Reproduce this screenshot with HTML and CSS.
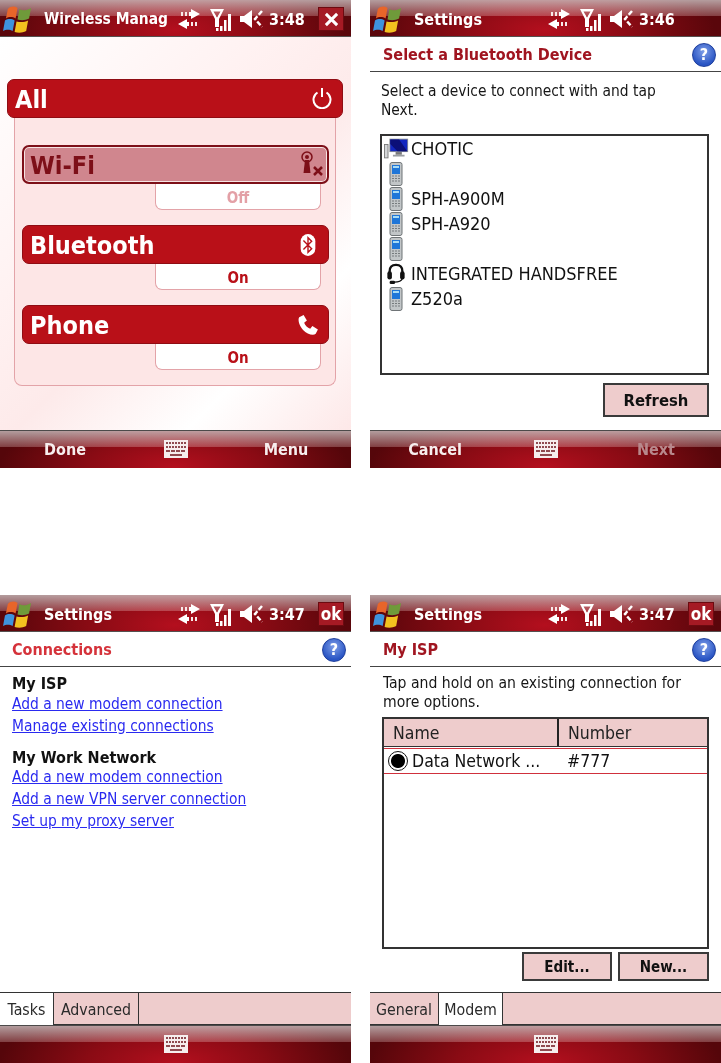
FILE: index.html
```html
<!DOCTYPE html>
<html lang="en">
<head>
<meta charset="utf-8">
<title>Windows Mobile screens</title>
<link rel="stylesheet" href="styles.css">
</head>
<body>
<svg class="defs" width="0" height="0" aria-hidden="true">
  <defs>
    <symbol id="flag" viewBox="0 0 30 28">
      <path d="M5 3C8 0 12 0 15 2L13 13C10 11 6 11 3 13Z" fill="#e8652a"/>
      <path d="M17 3C20 5 24 5 29 2L27 13C23 15 19 15 15 14Z" fill="#6f9a3a"/>
      <path d="M2 15C5 13 9 13 12 15L10 26C7 24 3 24 0 26Z" fill="#3f93dd"/>
      <path d="M14 16C18 17 22 17 26 15L24 26C20 28 16 28 12 27Z" fill="#f3c21f"/>
    </symbol>
    <symbol id="sync" viewBox="0 0 22 20">
      <path d="M13 0L22 5L13 10V7H11V3H13ZM9 10V13H11V17H9V20L0 15Z" fill="#fff"/>
      <path d="M3 3H5V7H3ZM7 3H9V7H7ZM13 13H15V17H13ZM17 13H19V17H17Z" fill="#f8eaea"/>
    </symbol>
    <symbol id="signal" viewBox="0 0 22 23">
      <path d="M0 1H14L9 11V19H5V11ZM3.500 3.500L7 9.500L10.500 3.500Z" fill="#fff"/>
      <path d="M6 20H8.500V23H6ZM10 18H12.500V23H10ZM14 12H16.500V23H14ZM18 6H21V23H18Z" fill="#fff"/>
    </symbol>
    <symbol id="speaker" viewBox="0 0 23 20">
      <path d="M0 7H4L12 1V19L4 13H0Z" fill="#fff"/>
      <path d="M22 2L15 10L22 18" fill="none" stroke="#fff" stroke-width="2.500" stroke-dasharray="5 2"/>
    </symbol>
    <symbol id="keyboard" viewBox="0 0 24 18">
      <rect width="24" height="18" fill="#f6eeee"/>
      <path d="M2 3H22M2 7H22" stroke="#8f4a50" stroke-width="2" stroke-dasharray="2 1"/>
      <path d="M2 11H22" stroke="#8f4a50" stroke-width="2" stroke-dasharray="4 1"/>
      <path d="M6 15H18" stroke="#8f4a50" stroke-width="2"/>
    </symbol>
    <symbol id="phone-dev" viewBox="0 0 14 24">
      <rect x="1" y="0.500" width="12" height="23" rx="2" fill="#c2c6c8" stroke="#6f7477"/>
      <rect x="3" y="3" width="8" height="9" fill="#1f76d8"/>
      <rect x="4" y="4" width="6" height="2" fill="#a8dcf5"/>
      <path d="M3 14H11M3 16.500H11M3 19H11" stroke="#767b7e" stroke-dasharray="2 1"/>
    </symbol>
    <symbol id="computer" viewBox="0 0 28 22">
      <rect x="0.500" y="6.500" width="4" height="15" fill="#d4d6d8" stroke="#777"/>
      <rect x="6" y="0" width="21" height="15" fill="#8a8f95"/>
      <path d="M7 1H26V14H7Z" fill="#1226c0"/>
      <path d="M7 1H17L26 14H15L7 6Z" fill="#0b0f78"/>
      <rect x="13" y="15" width="7" height="3" fill="#777"/>
      <rect x="10" y="18" width="13" height="2" fill="#9a9ea2"/>
    </symbol>
    <symbol id="headset" viewBox="0 0 22 24">
      <path d="M4 14V9C4 4 7 2 11 2S18 4 18 9V14" fill="none" stroke="#111" stroke-width="2.500"/>
      <rect x="1.500" y="9" width="5" height="9" rx="2.500" fill="#111"/>
      <rect x="15.500" y="9" width="5" height="9" rx="2.500" fill="#111"/>
      <path d="M18 17C17 20 14 21 9 21" fill="none" stroke="#111" stroke-width="1.500"/>
      <rect x="4" y="19.500" width="6" height="3.500" rx="1.500" fill="#111"/>
    </symbol>
  </defs>
</svg>

<main class="sheet">

  <section class="screen">
    <header class="titlebar">
      <svg class="flag"><use href="#flag"/></svg>
      <span class="app-name app-name-long">Wireless Manag</span>
      <svg class="st-sync"><use href="#sync"/></svg>
      <svg class="st-signal"><use href="#signal"/></svg>
      <svg class="st-speaker"><use href="#speaker"/></svg>
      <span class="clock">3:48</span>
      <span class="corner-btn">
        <svg class="close-x" viewBox="0 0 16 16"><path d="M2 2L14 14M14 2L2 14" stroke="#fff" stroke-width="3.200"/></svg>
      </span>
    </header>
    <div class="wireless">
      <div class="wl-all">
        <span>All</span>
        <svg class="wl-icon wl-icon-power" viewBox="0 0 22 22"><path d="M6.500 5.500A8.500 8.500 0 1 0 15.500 5.500" fill="none" stroke="#fff" stroke-width="2"/><path d="M11 1V10" stroke="#fff" stroke-width="2"/></svg>
      </div>
      <div class="wl-panel">
        <div class="wl-bar wl-bar-off">
          <span>Wi-Fi</span>
          <svg class="wl-icon wl-icon-wifi" viewBox="0 0 26 26"><circle cx="9" cy="6" r="5" fill="none" stroke="#7d0f18" stroke-width="1.500"/><circle cx="9" cy="6" r="2" fill="#7d0f18"/><path d="M7 9H11L12.500 22H5.500Z" fill="#7d0f18"/><path d="M16 16L24 24M24 16L16 24" stroke="#7d0f18" stroke-width="2.500"/></svg>
        </div>
        <div class="wl-state wl-state-off">Off</div>
        <div class="wl-bar">
          <span>Bluetooth</span>
          <svg class="wl-icon" viewBox="0 0 20 24"><rect x="2" y="0" width="16" height="24" rx="8" fill="#fff"/><path d="M5 7L14 16L10 20V4L14 8L5 17" fill="none" stroke="#b91018" stroke-width="1.500"/></svg>
        </div>
        <div class="wl-state">On</div>
        <div class="wl-bar">
          <span>Phone</span>
          <svg class="wl-icon" viewBox="0 0 20 20"><path d="M2 3L6 1L9 6L6.500 8C7.500 10.500 9.500 12.500 12 13.500L14 11L19 14L17 18C15 20 9 18.500 5.500 14.500C2 11 0.500 5 2 3Z" fill="#fff"/></svg>
        </div>
        <div class="wl-state">On</div>
      </div>
    </div>
    <footer class="softbar">
      <span class="soft">Done</span>
      <svg class="kbd"><use href="#keyboard"/></svg>
      <span class="soft">Menu</span>
    </footer>
  </section>

  <section class="screen">
    <header class="titlebar">
      <svg class="flag"><use href="#flag"/></svg>
      <span class="app-name">Settings</span>
      <svg class="st-sync"><use href="#sync"/></svg>
      <svg class="st-signal"><use href="#signal"/></svg>
      <svg class="st-speaker"><use href="#speaker"/></svg>
      <span class="clock">3:46</span>
      <span class="corner-btn corner-empty"></span>
    </header>
    <div class="pagehead">
      <span class="pagehead-title">Select a Bluetooth Device</span>
      <span class="help">?</span>
    </div>
    <div class="page">
      <p class="intro">Select a device to connect with and tap Next.</p>
      <ul class="devices">
        <li class="device"><svg class="dev-computer"><use href="#computer"/></svg><span>CHOTIC</span></li>
        <li class="device"><svg class="dev-phone"><use href="#phone-dev"/></svg></li>
        <li class="device"><svg class="dev-phone"><use href="#phone-dev"/></svg><span>SPH-A900M</span></li>
        <li class="device"><svg class="dev-phone"><use href="#phone-dev"/></svg><span>SPH-A920</span></li>
        <li class="device"><svg class="dev-phone"><use href="#phone-dev"/></svg></li>
        <li class="device"><svg class="dev-phone"><use href="#headset"/></svg><span>INTEGRATED HANDSFREE</span></li>
        <li class="device"><svg class="dev-phone"><use href="#phone-dev"/></svg><span>Z520a</span></li>
      </ul>
      <div class="actions actions-refresh"><span class="btn btn-refresh">Refresh</span></div>
    </div>
    <footer class="softbar">
      <span class="soft">Cancel</span>
      <svg class="kbd"><use href="#keyboard"/></svg>
      <span class="soft soft-off">Next</span>
    </footer>
  </section>

  <section class="screen">
    <header class="titlebar">
      <svg class="flag"><use href="#flag"/></svg>
      <span class="app-name">Settings</span>
      <svg class="st-sync"><use href="#sync"/></svg>
      <svg class="st-signal"><use href="#signal"/></svg>
      <svg class="st-speaker"><use href="#speaker"/></svg>
      <span class="clock">3:47</span>
      <span class="corner-btn">ok</span>
    </header>
    <div class="pagehead">
      <span class="pagehead-title pagehead-bright">Connections</span>
      <span class="help">?</span>
    </div>
    <div class="page page-links">
      <h2 class="group">My ISP</h2>
      <a class="task" href="#">Add a new modem connection</a>
      <a class="task" href="#">Manage existing connections</a>
      <h2 class="group group-next">My Work Network</h2>
      <a class="task" href="#">Add a new modem connection</a>
      <a class="task" href="#">Add a new VPN server connection</a>
      <a class="task" href="#">Set up my proxy server</a>
    </div>
    <nav class="tabs">
      <span class="tab tab-on tab-tasks">Tasks</span>
      <span class="tab tab-advanced">Advanced</span>
    </nav>
    <footer class="softbar softbar-center">
      <svg class="kbd"><use href="#keyboard"/></svg>
    </footer>
  </section>

  <section class="screen">
    <header class="titlebar">
      <svg class="flag"><use href="#flag"/></svg>
      <span class="app-name">Settings</span>
      <svg class="st-sync"><use href="#sync"/></svg>
      <svg class="st-signal"><use href="#signal"/></svg>
      <svg class="st-speaker"><use href="#speaker"/></svg>
      <span class="clock">3:47</span>
      <span class="corner-btn">ok</span>
    </header>
    <div class="pagehead">
      <span class="pagehead-title">My ISP</span>
      <span class="help">?</span>
    </div>
    <div class="page page-isp">
      <p class="intro intro-isp">Tap and hold on an existing connection for more options.</p>
      <div class="table">
        <div class="thead">
          <span class="th th-name">Name</span>
          <span class="th">Number</span>
        </div>
        <div class="row">
          <span class="radio"></span>
          <span class="cell-name">Data Network ...</span>
          <span class="cell-number">#777</span>
        </div>
      </div>
      <div class="actions actions-isp">
        <span class="btn btn-edit">Edit...</span>
        <span class="btn btn-new">New...</span>
      </div>
    </div>
    <nav class="tabs">
      <span class="tab tab-general">General</span>
      <span class="tab tab-on tab-modem">Modem</span>
    </nav>
    <footer class="softbar softbar-center">
      <svg class="kbd"><use href="#keyboard"/></svg>
    </footer>
  </section>

</main>
</body>
</html>
```

FILE: styles.css
```css
* { box-sizing: border-box; }

html, body { margin: 0; padding: 0; background: #fff; }

body {
  font-family: "DejaVu Sans Condensed", "DejaVu Sans", sans-serif;
  font-size: 14px;
  color: #111;
}

.defs { display: block; height: 0; }

.sheet {
  display: grid;
  grid-template-columns: 351px 351px;
  grid-template-rows: 468px 468px;
  column-gap: 19px;
  row-gap: 127px;
  width: 721px;
  height: 1063px;
}

.screen {
  display: flex;
  flex-direction: column;
  height: 468px;
  overflow: hidden;
  background: #fff;
  filter: blur(0.4px);
}

/* Title bar */
.titlebar {
  flex: 0 0 37px;
  display: flex;
  align-items: center;
  height: 37px;
  padding-top: 2px;
  color: #fff;
  border-bottom: 1px solid #55504f;
  background:
    linear-gradient(180deg, rgba(215,215,215,.72) 0, rgba(255,225,225,.26) 16px, transparent 16px),
    radial-gradient(ellipse 170px 60px at 175px 30px, #b40f1e 0, #8a0b14 50%, #5a060b 100%);
}

.flag { width: 29px; height: 27px; margin: 0 0 0 3px; flex: none; }

.app-name {
  width: 125px;
  margin-left: 12px;
  flex: none;
  white-space: nowrap;
  font-size: 16px;
  font-weight: 700;
}

.app-name-long { font-size: 15.400px; }

.st-sync { width: 22px; height: 20px; margin-left: 9px; flex: none; }
.st-signal { width: 22px; height: 23px; margin-left: 10px; flex: none; }
.st-speaker { width: 23px; height: 20px; margin-left: 8px; flex: none; }

.clock { width: 39px; margin-left: 6px; font-size: 16px; font-weight: 700; flex: none; }

.corner-btn {
  display: flex;
  align-items: center;
  justify-content: center;
  width: 26px;
  height: 24px;
  margin-left: 10px;
  flex: none;
  background: #a51a24;
  border: 1px solid #6c0a10;
  font-size: 17px;
  font-weight: 700;
}

.corner-empty { visibility: hidden; }

.close-x { width: 15px; height: 15px; }

/* Soft key bar */
.softbar {
  flex: 0 0 38px;
  display: grid;
  grid-template-columns: 130px 91px 130px;
  align-items: center;
  justify-items: center;
  height: 38px;
  margin-top: auto;
  color: #f7eeee;
  border-top: 1px solid #4c4a4a;
  background:
    linear-gradient(180deg, rgba(215,215,215,.72) 0, rgba(255,225,225,.26) 16px, transparent 16px),
    radial-gradient(ellipse 175px 60px at 175px 36px, #b40f1e 0, #8a0b14 50%, #55060a 100%);
}

.softbar-center .kbd { grid-column: 2; }

.soft { font-size: 16px; font-weight: 700; }
.soft-off { color: #b8888c; }

.kbd { width: 24px; height: 18px; margin-top: -1px; }

/* Wireless manager */
.wireless {
  flex: 1;
  padding: 42px 8px 0 7px;
  background: linear-gradient(135deg, #fff 0, #fff2f2 35%, #fdeaea 55%, #fff 78%, #fde8e8 100%);
}

.wl-all,
.wl-bar {
  display: flex;
  align-items: center;
  justify-content: space-between;
  height: 39px;
  padding: 1px 9px 0 7px;
  border: 1px solid #8f0c13;
  border-radius: 7px;
  background: #b91018;
  color: #fff;
  font-size: 25px;
  font-weight: 700;
}

.wl-icon { width: 22px; height: 22px; }
.wl-icon-power { margin-top: -3px; }
.wl-icon-wifi { width: 26px; height: 26px; margin-right: -6px; margin-top: -2px; }

.wl-panel {
  display: flex;
  flex-direction: column;
  width: 322px;
  height: 268px;
  margin-left: 7px;
  padding: 27px 7px 0;
  background: #fde6e6;
  border: 1px solid #e3a3a8;
  border-top: 0;
  border-radius: 0 0 8px 8px;
}

.wl-bar { width: 307px; }

.wl-bar-off {
  padding-left: 6px;
  color: #7d0f18;
  background: #d0868e;
  border: 2px solid #7d0f18;
  box-shadow: inset 0 0 0 1px #f6e4e4;
}

.wl-state {
  display: flex;
  align-items: center;
  justify-content: center;
  align-self: flex-end;
  width: 166px;
  height: 26px;
  margin: 0 7px 15px 0;
  padding-top: 2px;
  background: #fff;
  border: 1px solid #e3a3a8;
  border-top: 0;
  border-radius: 0 0 7px 7px;
  color: #b91018;
  font-size: 15px;
  font-weight: 700;
}

.wl-state-off { color: #e3a0a6; }

/* Page heading */
.pagehead {
  flex: 0 0 35px;
  display: flex;
  align-items: center;
  justify-content: space-between;
  padding: 1px 5px 0 13px;
  background: #fff;
  border-bottom: 1px solid #444;
}

.pagehead-title { font-size: 16px; font-weight: 700; color: #a01520; }
.pagehead-bright { margin-left: -1px; color: #d5323a; }

.help {
  display: flex;
  align-items: center;
  justify-content: center;
  width: 24px;
  height: 24px;
  border-radius: 50%;
  border: 1px solid #1f3f9c;
  background: radial-gradient(circle at 50% 35%, #7f9fe8, #2a55c4 70%);
  color: #fff;
  font-size: 16px;
  font-weight: 700;
}

.page { flex: 1; background: #fff; }

.intro {
  margin: 0;
  padding: 10px 60px 0 11px;
  font-size: 15.400px;
  line-height: 19px;
  color: #161616;
}

.devices {
  list-style: none;
  width: 329px;
  height: 241px;
  margin: 14px 0 0 10px;
  padding: 0 0 0 2px;
  border: 2px solid #333;
}

.device {
  display: flex;
  align-items: center;
  height: 25px;
  font-size: 18px;
}

.dev-computer { width: 25px; height: 21px; margin-right: 2px; flex: none; }
.dev-phone { width: 20px; height: 24px; margin: 0 5px 0 2px; flex: none; }

.actions { display: flex; justify-content: flex-end; padding-right: 12px; }
.actions-refresh { margin-top: 8px; }
.actions-isp { gap: 6px; margin-top: 3px; }

.btn {
  display: flex;
  align-items: center;
  justify-content: center;
  background: #eecccc;
  border: 2px solid #3a3a3a;
  font-weight: 700;
  font-size: 15px;
}

.btn-refresh { width: 106px; height: 34px; font-size: 16.500px; }
.btn-edit { width: 90px; height: 29px; }
.btn-new { width: 91px; height: 29px; }

/* Links */
.page-links { display: flex; flex-direction: column; align-items: flex-start; padding: 7px 0 0 12px; }

.group { margin: 0; height: 20px; font-size: 16px; line-height: 20px; font-weight: 700; color: #111; }
.group-next { height: 19px; margin-top: 11px; }

.task {
  font-size: 15.400px;
  line-height: 22px;
  height: 22px;
  color: #2a2af0;
  text-decoration: underline;
}

.group + .task { height: 20px; line-height: 20px; }
.group + .task + .task { margin-top: 1px; }

/* Tabs */
.tabs {
  flex: 0 0 33px;
  display: flex;
  height: 33px;
  background: #eecccc;
  border-top: 1px solid #333;
  border-bottom: 1px solid #333;
}

.tab {
  display: flex;
  align-items: center;
  justify-content: center;
  margin-top: -1px;
  padding-top: 1px;
  border-right: 1px solid #333;
  border-top: 1px solid #333;
  font-size: 15.800px;
  color: #2a2a2a;
}

.tab-on { background: #fff; margin-bottom: -1px; }
.tab-tasks { width: 54px; }
.tab-advanced { width: 85px; }
.tab-general { width: 69px; }
.tab-modem { width: 64px; }

/* ISP table */
.page-isp { padding: 0; }
.intro-isp { padding: 7px 20px 0 13px; font-size: 15.600px; }

.table {
  width: 327px;
  height: 232px;
  margin: 5px 0 0 12px;
  border: 2px solid #333;
}

.thead {
  display: grid;
  grid-template-columns: 175px 1fr;
  height: 28px;
  background: #eecccc;
  border-bottom: 1px solid #333;
}

.th {
  display: flex;
  align-items: center;
  padding-left: 9px;
  font-size: 17.500px;
  color: #222;
}

.th-name { border-right: 2px solid #222; }

.row {
  display: flex;
  align-items: center;
  height: 26px;
  margin-top: 1px;
  border-top: 1px solid #d0303c;
  border-bottom: 1px solid #d0303c;
  font-size: 17.500px;
}

.radio {
  width: 20px;
  height: 20px;
  margin: 0 4px 0 4px;
  flex: none;
  border: 1px solid #111;
  border-radius: 50%;
  background: radial-gradient(circle, #000 0, #000 6.500px, #fff 7.500px);
}

.cell-name { width: 155px; flex: none; white-space: nowrap; }
```
